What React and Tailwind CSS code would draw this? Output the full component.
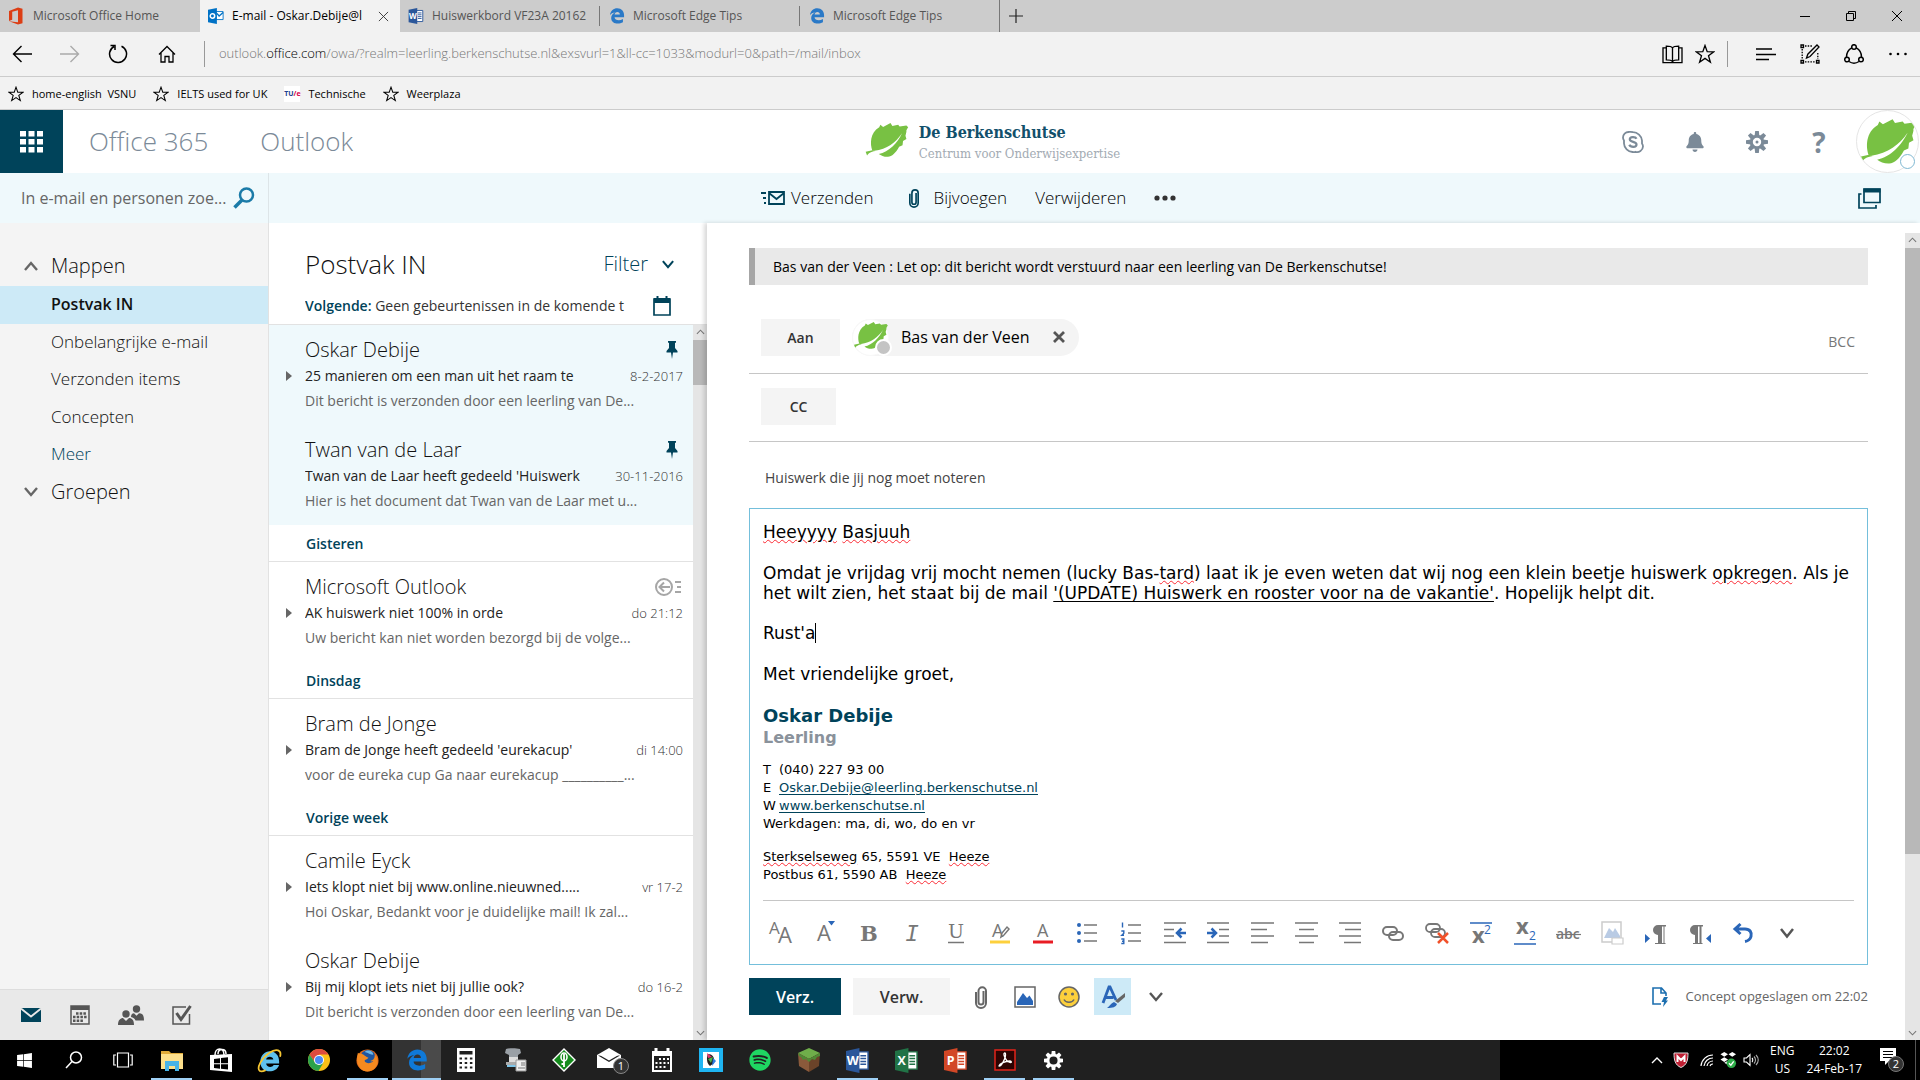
import {
  FaSpotify,
  FaWindows,
  FaBell,
} from "react-icons/fa";


// ---------- shared drawings ----------

function Leaf({ className }) {
  return (
    <svg viewBox="0 0 44 35" className={className} fill="#78c143">
      <path d="M7 28.500C4.300 22 4.500 10 14 4.500L15.200 1.800 18 4 25.600 0l1.900 3 6-1.200L35 3.600l7-1.100 1.800 2C43 6 41.500 7.500 42 9l-1 4 1 3.500-3.500 2L38 23l-3.500 1.500C31 31 27 34.500 23 34.800 19 35 16 33.500 13.500 31.800 24 30 33 20 37.500 10.500 31 20 22 27 9 28.600Z" />
      <path d="M0 29.500 7 28l3 .8C5 29.800 3 31 1.500 33.500Z" />
    </svg>
  );
}

function OfficeFile({ letter, color, className }) {
  return (
    <svg viewBox="0 0 24 26" className={className}>
      <path d="M12 4h11v18H12z" fill="#fff" stroke={color} strokeWidth="1.500" />
      <path d="M15 8h6M15 11h6M15 14h6M15 17h6" stroke={color} strokeWidth="1.500" />
      <path d="M0 3 14 0v26L0 23z" fill={color} />
      <text x="7" y="18" textAnchor="middle" fontSize="13" fontWeight="700" fontFamily="Open Sans, sans-serif" fill="#fff">
        {letter}
      </text>
    </svg>
  );
}

function EdgeLogo({ className, color = "#2a79c7" }) {
  return (
    <svg viewBox="0 0 24 24" className={className}>
      <path
        fill={color}
        d="M1.500 10.700C2.300 4.300 7 .5 12.300 .5 18.800 .5 22.600 5.200 22.600 11v2.700H8.300c.2 4.200 6.700 6.200 12.600 2.700v4.900C14.400 25 3.600 24 3.300 15.300 3.200 11.400 5.300 8.500 8.900 6.900 5.800 7 3.200 8.200 1.500 10.700ZM8.400 9.700h7.900c0-2.300-1.500-3.700-3.800-3.700C10.200 6 8.700 7.400 8.400 9.700Z"
      />
    </svg>
  );
}

function Star({ className }) {
  return (
    <svg viewBox="0 0 20 20" className={className} fill="none" stroke="currentColor" strokeWidth="1.300">
      <path d="m10 1.500 2.200 6.200 6.600.1-5.300 4 1.900 6.400-5.400-3.800-5.400 3.800 1.900-6.400-5.300-4 6.600-.1z" />
    </svg>
  );
}

function Chevron({ up, className }) {
  return (
    <svg viewBox="0 0 14 10" className={className} fill="none" stroke="currentColor" strokeWidth="2.400">
      {up ? <path d="M1 9 7 2l6 7" /> : <path d="m1 1 6 7 6-7" />}
    </svg>
  );
}

function Clip({ className }) {
  return (
    <svg viewBox="0 0 12 24" className={className} fill="none" stroke="currentColor" strokeWidth="2">
      <path d="M8.500 6v11a2.500 2.500 0 0 1-5 0V6a3.700 3.700 0 0 1 7.500 0v12a5 5 0 0 1-10 0V7" />
    </svg>
  );
}

function ThinArrow({ up }) {
  return (
    <svg viewBox="0 0 10 6" className="w-[9px] h-[6px]" fill="none" stroke="#777" strokeWidth="1.200">
      {up ? <path d="m1 5 4-4 4 4" /> : <path d="m1 1 4 4 4-4" />}
    </svg>
  );
}

function Gear({ className }) {
  const teeth = [0, 45, 90, 135, 180, 225, 270, 315];
  return (
    <svg viewBox="0 0 22 22" className={className} fill="currentColor">
      {teeth.map((a) => (
        <path key={a} d="M9 0h4l.6 5H8.400z" transform={`rotate(${a} 11 11)`} />
      ))}
      <circle cx="11" cy="11" r="6.200" fill="none" stroke="currentColor" strokeWidth="3" />
    </svg>
  );
}


// ---------- browser ----------

const tips = ["tips-1", "tips-2"];

function TabStrip() {
  return (
    <div className="flex h-8 shrink-0 bg-[#ccc] text-[12px] text-[#555]">
      <button className="flex w-[200px] items-center gap-[9px] pl-2 text-left">
        <svg viewBox="0 0 16 18" className="w-4 h-[18px] shrink-0">
          <path fill="#dc3e15" d="M1 4 10 .5l4.500 1.300v14.400L10 17.500 1 14.300l9 1V3.300L4.200 4.700v8L1 14z" />
        </svg>
        <span className="truncate">Microsoft Office Home</span>
      </button>
      <div className="flex w-[200px] items-center gap-2 bg-[#f2f2f2] pl-2 text-black">
        <svg viewBox="0 0 18 18" className="size-4 shrink-0">
          <path fill="#fff" stroke="#0072c6" d="M9 4h8v9H9z" />
          <path fill="none" stroke="#0072c6" strokeWidth="1.500" d="m10 6 2.500 3L17 5" />
          <path fill="#0072c6" d="m0 2 10-2v18L0 16z" />
          <circle cx="5" cy="9" r="2.500" fill="none" stroke="#fff" strokeWidth="1.700" />
        </svg>
        <span className="w-[138px] overflow-hidden whitespace-nowrap">E-mail - Oskar.Debije@l</span>
        <button aria-label="Tabblad sluiten">
          <svg viewBox="0 0 12 12" className="size-[11px]" stroke="#333" fill="none">
            <path d="m1 1 10 10M11 1 1 11" />
          </svg>
        </button>
      </div>
      <button className="flex w-[199px] items-center gap-2 pl-2 text-left">
        <OfficeFile letter="W" color="#2b579a" className="size-4 shrink-0" />
        <span className="overflow-hidden whitespace-nowrap w-[158px]">Huiswerkbord VF23A 20162</span>
      </button>
      {tips.map((id) => (
        <button key={id} className="flex w-[200px] items-center text-left">
          <span className="h-5 w-px bg-[#777]" />
          <span className="flex items-center gap-2 pl-[9px]">
            <EdgeLogo className="size-4 shrink-0" />
            Microsoft Edge Tips
          </span>
        </button>
      ))}
      <button className="flex items-center border-l border-[#777] pl-[9px]" aria-label="Nieuw tabblad">
        <svg viewBox="0 0 14 14" className="size-[14px]" stroke="#222" strokeWidth="1.200">
          <path d="M7 0v14M0 7h14" />
        </svg>
      </button>
      <div className="ml-auto flex items-center gap-9 pr-[18px]">
        <button aria-label="Minimaliseren">
          <svg viewBox="0 0 10 10" className="size-[10px]" stroke="#000"><path d="M0 5.500h10" /></svg>
        </button>
        <button aria-label="Verkleinen">
          <svg viewBox="0 0 10 10" className="size-[10px]" stroke="#000" fill="none">
            <path d="M.5 2.500h7v7h-7zM2.500 2.500v-2h7v7h-2" />
          </svg>
        </button>
        <button aria-label="Sluiten">
          <svg viewBox="0 0 10 10" className="size-[10px]" stroke="#000"><path d="m0 0 10 10M10 0 0 10" /></svg>
        </button>
      </div>
    </div>
  );
}

function AddressBar() {
  return (
    <div className="flex h-[45px] shrink-0 items-center border-b border-[#ccc] bg-[#f2f2f2] text-black">
      <div className="flex w-[204px] items-center gap-7 pl-3">
        <button aria-label="Terug">
          <svg viewBox="0 0 20 18" className="w-5 h-[18px]" fill="none" stroke="#000" strokeWidth="1.400"><path d="M20 9H1.500M9.500 1l-8 8 8 8" /></svg>
        </button>
        <button aria-label="Vooruit">
          <svg viewBox="0 0 20 18" className="w-5 h-[18px]" fill="none" stroke="#aaa" strokeWidth="1.400"><path d="M0 9h18.500M10.500 1l8 8-8 8" /></svg>
        </button>
        <button aria-label="Vernieuwen">
          <svg viewBox="0 0 20 20" className="size-5" fill="none" stroke="#000" strokeWidth="1.500"><path d="M13.500 2.200A8.500 8.500 0 1 1 6 2.500M2.500 1.500h4.500v4.500" /></svg>
        </button>
        <button aria-label="Startpagina" className="pl-0.5">
          <svg viewBox="0 0 18 18" className="size-[18px]" fill="none" stroke="#000" strokeWidth="1.300"><path d="M1 9.500 9 1.500l8 8M3 8v9h4v-5.500h4V17h4V8" /></svg>
        </button>
      </div>
      <span className="h-[26px] w-px bg-[#999]" />
      <div className="flex-1 truncate pl-[14px] text-[13px] font-light text-[#777]">
        outlook.<span className="text-black">office.com</span>/owa/?realm=leerling.berkenschutse.nl&exsvurl=1&ll-cc=1033&modurl=0&path=/mail/inbox
      </div>
      <button aria-label="Leesweergave">
        <svg viewBox="0 0 22 20" className="w-[21px] h-[19px]" fill="none" stroke="#000" strokeWidth="1.400"><path d="M11 3v14.500M11 3c-1-1.500-3-1.800-6.500-1.800v14.500c3.500 0 5.500.3 6.500 1.800 1-1.500 3-1.800 6.500-1.800V1.200C14 1.200 12 1.500 11 3ZM4 3H1v15.500h20V3h-3" /></svg>
      </button>
      <button className="ml-3" aria-label="Favorieten"><Star className="size-[20px]" /></button>
      <span className="mx-3 h-[26px] w-px bg-[#999]" />
      <div className="flex items-center gap-6 pl-4 pr-3">
        <button aria-label="Hub">
          <svg viewBox="0 0 20 14" className="w-5 h-[14px]" stroke="#000" strokeWidth="1.300"><path d="M0 2h16M0 7.500h20M0 12.500h13" /></svg>
        </button>
        <button aria-label="Webnotitie">
          <svg viewBox="0 0 20 20" className="size-5" fill="none" stroke="#000" strokeWidth="1.300">
            <path d="M1 1h2.500v2.500H1zM1 16.500h2.500V19H1zM16.500 16.500H19V19h-2.500z" />
            <path strokeDasharray="1.500 1.200" d="M5 2h7M2.200 5v10M5 17.800h10M17.800 9v6" />
            <path d="m6.500 14 1.300-3.800L17 1l2 2-9 9.500z" />
          </svg>
        </button>
        <button aria-label="Delen">
          <svg viewBox="0 0 20 20" className="size-5" fill="none" stroke="#000" strokeWidth="1.500">
            <circle cx="10" cy="3" r="2.300" /><circle cx="3" cy="15.500" r="2.300" /><circle cx="17" cy="15.500" r="2.300" />
            <path d="M7.700 3.800C4.500 5.500 2.500 9 2.500 13M12.300 3.800c3.200 1.700 5.200 5.200 5.200 9.200M5 17.500c3 2 7 2 10 0" />
          </svg>
        </button>
        <button aria-label="Meer">
          <svg viewBox="0 0 20 4" className="w-5 h-1"><circle cx="2.500" cy="2" r="1.300" /><circle cx="10" cy="2" r="1.300" /><circle cx="17.500" cy="2" r="1.300" /></svg>
        </button>
      </div>
    </div>
  );
}

function FavouritesBar() {
  return (
    <div className="flex h-[33px] shrink-0 items-center gap-[17px] border-b border-[#ccc] bg-[#f2f2f2] pt-0.5 pl-2 text-[11px] text-black">
      <a href="#home" className="flex items-center gap-2"><Star className="size-4 shrink-0" />home-english&nbsp; VSNU</a>
      <a href="#ielts" className="flex items-center gap-2"><Star className="size-4 shrink-0" />IELTS used for UK</a>
      <a href="#tue" className="flex items-center gap-2">
        <span className="flex size-4 items-center justify-center bg-white text-[7px] font-bold text-[#20408f]">TU<span className="text-[#d6004a]">/e</span></span>
        Technische
      </a>
      <a href="#weer" className="flex items-center gap-2"><Star className="size-4 shrink-0" />Weerplaza</a>
    </div>
  );
}


// ---------- Office header ----------

function SuiteHeader() {
  return (
    <header className="flex h-[63px] shrink-0 items-center bg-white">
      <button className="flex h-full w-[63px] items-center justify-center bg-[#00435a]" aria-label="Apps">
        <svg viewBox="0 0 23 22" className="w-[23px] h-[22px]" fill="#fff">
          <path d="M0 0h6v5.500H0zM8.500 0h6v5.500h-6zM17 0h6v5.500h-6zM0 8h6v5.500H0zM8.500 8h6v5.500h-6zM17 8h6v5.500h-6zM0 16h6v5.500H0zM8.500 16h6v5.500h-6zM17 16h6v5.500h-6z" />
        </svg>
      </button>
      <div className="flex flex-1 gap-[52px] pl-[26px] text-[26px] font-light text-[#7b8a98]">
        <span>Office 365</span>
        <span>Outlook</span>
      </div>
      <div className="flex items-center gap-[10px]">
        <Leaf className="mb-1 h-[34px] w-[44px]" />
        <div className="pt-[3px] pr-6 font-['DejaVu_Serif_Condensed','DejaVu_Serif',serif] leading-[21px]">
          <div className="text-[16px] font-bold text-[#12506b]">De Berkenschutse</div>
          <div className="text-[13px] text-[#a3abb3]">Centrum voor Onderwijsexpertise</div>
        </div>
      </div>
      <div className="flex flex-1 items-center justify-end text-[#7b8a98]">
        <button className="flex w-[62px] justify-center" aria-label="Skype">
          <svg viewBox="0 0 22 22" className="size-[22px]" fill="none" stroke="currentColor" strokeWidth="1.800">
            <path d="M6.500 1C3.500 1 1 3.500 1 6.500c0 1.200.4 2.200 1 3v3c.2 4.500 4 8.300 8.500 8.500 1 .2 2 .1 3-.2 3.500 1 7.300-1.500 7.500-5.300 0-1.200-.4-2.200-1-3v-3C19.500 5 15.500 1.200 11 1.200 9.500.8 8 1 6.500 1Z" />
            <path strokeWidth="2.200" d="M14.500 7.800C13.500 5.500 7.800 5.400 7.800 8.300c0 3.200 6.700 2 6.700 5.200 0 3.200-6 3-7.200.3" />
          </svg>
        </button>
        <button className="flex w-[62px] justify-center" aria-label="Meldingen"><FaBell className="size-5" /></button>
        <button className="flex w-[62px] justify-center" aria-label="Instellingen">
          <svg viewBox="0 0 22 22" className="size-[22px]" fill="currentColor">
            {[0, 45, 90, 135, 180, 225, 270, 315].map((a) => (
              <path key={a} d="M9.200 0h3.600l.6 5H8.600z" transform={`rotate(${a} 11 11)`} />
            ))}
            <circle cx="11" cy="11" r="5.700" fill="none" stroke="currentColor" strokeWidth="3" />
            <circle cx="11" cy="11" r="1.500" />
          </svg>
        </button>
        <button className="w-[62px] text-[28px] leading-8 font-bold" aria-label="Help">?</button>
        <button className="relative ml-[6px] mr-px size-[63px]" aria-label="Account">
          <span className="flex size-full items-center justify-center overflow-hidden rounded-full border border-[#e5e5e5]">
            <Leaf className="h-[45px] w-[56px]" />
          </span>
          <span className="absolute right-1 bottom-1 size-[15px] rounded-full border border-[#7fb8d2] bg-white" />
        </button>
      </div>
    </header>
  );
}

function CommandBar() {
  return (
    <div className="flex h-[50px] shrink-0 items-center bg-[#eff9fc]">
      <div className="flex h-full w-[269px] shrink-0 items-center border-r border-[#dde5e8] pl-[21px]">
        <input
          aria-label="Zoeken"
          placeholder="In e-mail en personen zoe..."
          className="w-[212px] bg-transparent text-[16px] text-[#444] outline-none placeholder:text-[#666]"
        />
        <button aria-label="Zoek">
          <svg viewBox="0 0 22 22" className="size-[22px]" fill="none" stroke="#1b7ba8" strokeWidth="2.500">
            <circle cx="13.500" cy="8" r="6.500" /><path strokeWidth="3.500" d="M9 13 1.500 20.500" />
          </svg>
        </button>
      </div>
      <div className="flex flex-1 items-center pl-[492px] text-[17px] font-light text-black">
        <button className="flex items-center gap-[6px]">
          <svg viewBox="0 0 24 14" className="w-6 h-[14px]" fill="none" stroke="#00435a" strokeWidth="1.800">
            <path d="M8 1h15v12H8zM8 2l7.500 6L23 2M0 2h5M2 7h3M3 12h2" />
          </svg>
          Verzenden
        </button>
        <button className="ml-9 flex items-center gap-[14px]">
          <Clip className="h-5 w-[10px] text-[#00435a]" />
          Bijvoegen
        </button>
        <button className="ml-7">Verwijderen</button>
        <button className="ml-7" aria-label="Meer opdrachten">
          <svg viewBox="0 0 22 6" className="w-[22px] h-[6px]" fill="#333"><circle cx="3" cy="3" r="2.600" /><circle cx="11" cy="3" r="2.600" /><circle cx="19" cy="3" r="2.600" /></svg>
        </button>
      </div>
      <button className="mr-[39px]" aria-label="Openen in nieuw venster">
        <svg viewBox="0 0 23 21" className="w-[23px] h-[21px]" fill="none" stroke="#00435a" strokeWidth="1.700">
          <path d="M6 1h16v13.500H6zM3.500 6H1v14h17v-3" /><path strokeWidth="4" d="M5.500 2.500h17" />
        </svg>
      </button>
    </div>
  );
}


// ---------- folders ----------

const folders = ["Postvak IN", "Onbelangrijke e-mail", "Verzonden items", "Concepten", "Meer"];

function Sidebar() {
  return (
    <nav className="flex w-[269px] shrink-0 flex-col border-r border-[#e2e2e2] bg-[#f4f4f4] text-[#111]">
      <button className="mt-[23px] flex h-10 items-center gap-[13px] pl-6 text-[20px] font-light">
        <Chevron up className="h-[10px] w-[14px] text-[#666]" />
        Mappen
      </button>
      <ul className="grid h-[188px] grid-rows-5 text-[17px] font-light">
        {folders.map((name) => (
          <li key={name}>
            <button
              className={
                "flex h-full w-full items-center pb-0.5 pl-[51px] " +
                (name === "Postvak IN" ? "bg-[#cdeaf7] text-[16px] font-semibold" : name === "Meer" ? "text-[#00435a]" : "")
              }
            >
              {name}
            </button>
          </li>
        ))}
      </ul>
      <button className="flex h-[37px] items-center gap-[13px] pb-0.5 pl-6 text-[20px] font-light">
        <Chevron className="h-[10px] w-[14px] text-[#666]" />
        Groepen
      </button>
      <div className="mt-auto flex h-[51px] items-center gap-7 border-t border-[#ddd] bg-[#e9e9e9] pl-5 text-[#555]">
        <button aria-label="E-mail" className="px-px">
          <svg viewBox="0 0 20 14" className="w-5 h-[14px]"><path fill="#00435a" d="M0 0h20v14H0z" /><path fill="none" stroke="#e9e9e9" strokeWidth="1.800" d="m0 .5 10 8 10-8" /></svg>
        </button>
        <button aria-label="Agenda">
          <svg viewBox="0 0 20 20" className="size-5" fill="none" stroke="currentColor"><path strokeWidth="1.500" d="M1 1h18v18H1z" /><path strokeWidth="4" d="M1 3h18" /><path strokeWidth="2.500" strokeDasharray="2.500 1.200" d="M6 8.500h11M3 12h14M3 15.800h11" /></svg>
        </button>
        <button aria-label="Personen">
          <svg viewBox="0 0 26 20" className="w-[26px] h-5" fill="currentColor">
            <circle cx="8" cy="9" r="3.700" /><path d="M0 20c0-5 2.500-7 5-7l3 3 3-3c3 0 5 2 5 7z" />
            <circle cx="18.500" cy="4" r="3.700" /><path d="M13 12c0-2.500 1-3.800 3-3.800l2.500 2.500L21 8.200c3.500 0 5 2 5 7.300h-8.500C17 13.500 15 12.500 13 12z" />
          </svg>
        </button>
        <button aria-label="Taken">
          <svg viewBox="0 0 20 20" className="size-5" fill="none" stroke="currentColor"><path strokeWidth="1.500" d="M17.500 9v10H1V2h13" /><path strokeWidth="3" d="m4.500 8 4.500 6.500L18.500 1" /></svg>
        </button>
      </div>
    </nav>
  );
}


// ---------- message list ----------

const messages = [
  { from: "Oskar Debije", subject: "25 manieren om een man uit het raam te", date: "8-2-2017", preview: "Dit bericht is verzonden door een leerling van De...", pinned: true, thread: true },
  { from: "Twan van de Laar", subject: "Twan van de Laar heeft gedeeld 'Huiswerk", date: "30-11-2016", preview: "Hier is het document dat Twan van de Laar met u...", pinned: true },
  { group: "Gisteren" },
  { from: "Microsoft Outlook", subject: "AK huiswerk niet 100% in orde", date: "do 21:12", preview: "Uw bericht kan niet worden bezorgd bij de volge...", bounced: true, thread: true },
  { group: "Dinsdag" },
  { from: "Bram de Jonge", subject: "Bram de Jonge heeft gedeeld 'eurekacup'", date: "di 14:00", preview: "voor de eureka cup Ga naar eurekacup __________...", thread: true },
  { group: "Vorige week" },
  { from: "Camile Eyck", subject: "Iets klopt niet bij www.online.nieuwned.....", date: "vr 17-2", preview: "Hoi Oskar, Bedankt voor je duidelijke mail! Ik zal...", thread: true },
  { from: "Oskar Debije", subject: "Bij mij klopt iets niet bij jullie ook?", date: "do 16-2", preview: "Dit bericht is verzonden door een leerling van De...", thread: true },
];

function MessageRow({ m }) {
  return (
    <button className={"flex h-[100px] w-full flex-col pt-3 pr-[10px] text-left " + (m.pinned ? "bg-[#eff9fc]" : "")}>
      <span className="flex w-full items-center pl-9 text-[20px] leading-[26px] font-light text-[#111]">
        <span className="flex-1">{m.from}</span>
        {m.pinned && (
          <svg viewBox="0 0 12 18" className="mr-[5px] h-[18px] w-3" fill="#00435a"><path d="M2 0h8v1.500L9 2v5l2.500 3v1.500H7L6 18 5 11.500H.5V10L3 7V2L2 1.500z" /></svg>
        )}
        {m.bounced && (
          <svg viewBox="0 0 28 18" className="h-[18px] w-7" fill="none" stroke="#a6a6a6" strokeWidth="2">
            <circle cx="9" cy="9" r="8" /><path d="M15 9H5M9 4.500 4.500 9 9 13.500M20 4h6M22 9h4M20 14h6" />
          </svg>
        )}
      </span>
      <span className="flex w-full items-center text-[14px] leading-[26px] text-[#222]">
        <span className="w-9 shrink-0 pl-[17px]">
          {m.thread && <svg viewBox="0 0 6 10" className="h-[10px] w-[6px]" fill="#666"><path d="m0 0 6 5-6 5z" /></svg>}
        </span>
        <span className="w-[276px] overflow-hidden whitespace-nowrap">{m.subject}</span>
        <span className="ml-auto text-[13px] font-light text-[#333]">{m.date}</span>
      </span>
      <span className="pl-9 text-[14px] leading-[24px] text-[#666]">{m.preview}</span>
    </button>
  );
}

function MessageList() {
  return (
    <section className="flex w-[438px] shrink-0 flex-col bg-white">
      <div className="flex h-[102px] shrink-0 flex-col border-b border-[#e2e2e2] pl-9">
        <div className="mt-[22px] flex h-[38px] items-center">
          <h1 className="flex-1 text-[26px] font-light text-[#111]">Postvak IN</h1>
          <button className="mr-[33px] flex items-center gap-[14px] text-[20px] font-light text-[#00435a]">
            Filter
            <Chevron className="h-[9px] w-3" />
          </button>
        </div>
        <div className="mt-3 flex items-center text-[14px] text-[#333]">
          <span className="w-[330px] overflow-hidden whitespace-nowrap">
            <b className="font-semibold text-[#00435a]">Volgende:</b> Geen gebeurtenissen in de komende t
          </span>
          <button className="ml-[18px]" aria-label="Agenda openen">
            <svg viewBox="0 0 18 20" className="w-[18px] h-5" fill="none" stroke="#00435a"><path strokeWidth="1.700" d="M1 3h16v16H1z" /><path strokeWidth="5" d="M1 4.500h16" /><path strokeWidth="2" d="M4.500 0v4M13.500 0v4" /></svg>
          </button>
        </div>
      </div>
      <div className="flex min-h-0 flex-1">
        <div className="min-w-0 flex-1 overflow-hidden">
          {messages.map((m, i) =>
            m.group ? (
              <h2 key={i} className="flex h-[37px] items-center border-b border-[#e2e2e2] pl-[37px] text-[14px] font-semibold text-[#00435a]">
                {m.group}
              </h2>
            ) : (
              <MessageRow key={i} m={m} />
            )
          )}
        </div>
        <div className="flex w-[14px] flex-col items-center bg-[#e5e5e5] py-1">
          <ThinArrow up />
          <div className="mt-[5px] h-[45px] w-full bg-[#b8b8b8]" />
          <div className="mt-auto flex"><ThinArrow /></div>
        </div>
      </div>
    </section>
  );
}


// ---------- compose ----------

const wavy = "underline decoration-wavy decoration-1 decoration-red-500 underline-offset-1";
const g = "#777";
const b = "#2a66b8";

const formatTools = [
  ["Lettertype", <><text x="0" y="14" fontSize="17" fill={g}>A</text><text x="9" y="23" fontSize="22" fill={g}>A</text></>],
  ["Tekengrootte", <><text x="4" y="21" fontSize="22" fill={g}>A</text><path fill={b} d="M15 1h7l-3.500 4.500z" /></>],
  ["Vet", <text x="4" y="21" fontSize="21" fontWeight="700" fontFamily="DejaVu Serif" fill={g}>B</text>],
  ["Cursief", <text x="5" y="21" fontSize="23" fontStyle="italic" fontFamily="Liberation Mono" fill={g}>I</text>],
  ["Onderstrepen", <><text x="4" y="18" fontSize="19" fontFamily="DejaVu Serif" fill={g}>U</text><path stroke={g} strokeWidth="1.500" d="M4 22.500h16" /></>],
  ["Markeren", <><text x="4" y="17" fontSize="18" fill={g}>A</text><path fill="#fff" stroke={g} strokeWidth="1.500" d="m13 17 1-4 5-6 2 2-5 6z" /><path stroke="#fdd03c" strokeWidth="3" d="M2 22h20" /></>],
  ["Tekstkleur", <><text x="6" y="17" fontSize="18" fill={g}>A</text><path stroke="#e81c24" strokeWidth="3" d="M2 22h20" /></>],
  ["Opsomming", <><path stroke={g} strokeWidth="1.500" d="M9 5h13M9 13h13M9 21h13" /><g fill={b}><circle cx="4" cy="5" r="2" /><circle cx="4" cy="13" r="2" /><circle cx="4" cy="21" r="2" /></g></>],
  ["Nummering", <><path stroke={g} strokeWidth="1.500" d="M9 5h13M9 13h13M9 21h13" /><g stroke={b} strokeWidth="1.400" fill="none"><path d="M3.500 2.500v5M2.300 11h2.500v2.200l-2 2H5M2.300 19h2.500v4.500H2.300M3 21.200h2" /></g></>],
  ["Inspringing verkleinen", <><path stroke={g} strokeWidth="1.500" d="M1 3h22M1 9.500h10M1 16h10M1 22.500h22" /><path stroke={b} strokeWidth="2.500" fill="none" d="M23 13h-9M18.500 8.500 14 13l4.500 4.500" /></>],
  ["Inspringing vergroten", <><path stroke={g} strokeWidth="1.500" d="M1 3h22M13 9.500h10M13 16h10M1 22.500h22" /><path stroke={b} strokeWidth="2.500" fill="none" d="M1 13h9M5.500 8.500 10 13l-4.500 4.500" /></>],
  ["Links uitlijnen", <path stroke={g} strokeWidth="1.500" d="M1 3h23M1 9.500h16M1 16h23M1 22.500h17" />],
  ["Centreren", <path stroke={g} strokeWidth="1.500" d="M1 3h23M5 9.500h15M1 16h23M5 22.500h15" />],
  ["Rechts uitlijnen", <path stroke={g} strokeWidth="1.500" d="M1 3h22M7 9.500h16M1 16h22M6 22.500h17" />],
  ["Hyperlink", <g fill="none" stroke={g} strokeWidth="2"><rect x="2" y="7" width="14" height="8" rx="4" /><rect x="8" y="12" width="14" height="8" rx="4" /></g>],
  ["Hyperlink verwijderen", <><g fill="none" stroke={g} strokeWidth="1.800"><rect x="1" y="4" width="14" height="8" rx="4" /><rect x="6" y="9" width="14" height="8" rx="4" /></g><path stroke="#f1512a" strokeWidth="2.500" d="m13 13 10 10M23 13 13 23" /></>],
  ["Superscript", <><text x="3" y="23" fontSize="22" fontWeight="700" fill={g}>x</text><text x="15" y="14" fontSize="12" fill={b}>2</text><path stroke={b} strokeWidth="1.500" d="M1 3h22" /></>],
  ["Subscript", <><text x="3" y="14" fontSize="22" fontWeight="700" fill={g}>x</text><text x="16" y="20" fontSize="12" fill={b}>2</text><path stroke={b} strokeWidth="1.500" d="M1 24h22" /></>],
  ["Doorhalen", <><text x="0" y="19" fontSize="14" fontWeight="600" fill={g}>abc</text><path stroke={g} strokeWidth="1.200" d="M0 14.500h25" /></>],
  ["Afbeelding", <><path fill="#fff" stroke="#ccc" strokeWidth="1.500" d="M2 2h19v20H2z" /><path fill="#b9cbe4" d="M4 18l5-10 4 4 2-4 5 8v2z" /><path fill="#fff" stroke="#ccc" strokeWidth="1.200" d="M12 18h11v6H12z" /></>],
  ["Links naar rechts", <><path fill={b} d="m1 14 5 4.500-5 4.500z" /><path fill={g} d="M22 5H14a5 5 0 0 0 0 10v8h-3v1h8v-1h-1V6.500h1.500V23h-1v1h3v-1h-1V6.500H22Z" /></>],
  ["Rechts naar links", <><path fill={b} d="m23 14-5 4.500 5 4.500z" /><path fill={g} d="M15 5H7a5 5 0 0 0 0 10v8H5v1h6v-1h-1V6.500h1.500V23h-1v1h4v-1h-1V6.500H15Z" /></>],
  ["Ongedaan maken", <path fill="none" stroke={b} strokeWidth="3" d="M9.500 4 4 9l5.500 5M4.500 9H14c5 0 7 3.500 6 7.500-.8 3-3 4.500-6 5" />],
  ["Meer opmaak", <path fill="none" stroke="#555" strokeWidth="2.500" d="m6 9 6 7.500L18 9" />],
];

function Editor() {
  return (
    <div className="mt-[10px] border border-[#74bfdb]">
      <div
        role="textbox"
        aria-label="Bericht"
        className="pt-[13px] pl-[13px] pr-[23px] font-['DejaVu_Sans',Verdana,sans-serif] text-[17px] leading-[20px] text-black"
      >
        <p><span className={wavy}>Heeyyyy</span> <span className={wavy}>Basjuuh</span></p>
        <p className="mt-[21px]">
          <span className="block whitespace-nowrap [text-align-last:justify]">
            Omdat je vrijdag vrij mocht nemen (lucky Bas-<span className={wavy}>tard</span>) laat ik je even weten dat wij nog een klein beetje huiswerk <span className={wavy}>opkregen</span>. Als je
          </span>
          het wilt zien, het staat bij de mail <u className="underline-offset-2">'(UPDATE) Huiswerk en rooster voor na de vakantie'</u>. Hopelijk helpt dit.
        </p>
        <p className="mt-5 flex">Rust'a<span className="h-5 w-px bg-black" /></p>
        <p className="mt-[21px]">Met vriendelijke groet,</p>
        <p className="mt-[21px] text-[18px] leading-[22px] font-bold text-[#00435a]">Oskar Debije</p>
        <p className="text-[16px] leading-[22px] font-bold text-[#8a929b]">Leerling</p>
        <div className="mt-3 grid grid-cols-[16px_auto] text-[13px] leading-[18px]">
          <span>T</span><span>(040) 227 93 00</span>
          <span>E</span><a href="mailto:Oskar.Debije@leerling.berkenschutse.nl" className="text-[#00435a] underline underline-offset-2">Oskar.Debije@leerling.berkenschutse.nl</a>
          <span>W</span><a href="#site" className="text-[#00435a] underline underline-offset-2">www.berkenschutse.nl</a>
        </div>
        <p className="text-[13px] leading-[18px]">Werkdagen: ma, di, wo, do en vr</p>
        <p className="mt-[15px] text-[13px] leading-[18px]"><span className={wavy}>Sterkselseweg</span> 65, 5591 VE &nbsp;<span className={wavy}>Heeze</span></p>
        <p className="text-[13px] leading-[18px]">Postbus 61, 5590 AB &nbsp;<span className={wavy}>Heeze</span></p>
      </div>
      <div className="mx-[13px] mt-4 border-t border-[#c6c6c6]" />
      <div className="ml-[9px] grid h-[63px] w-[1050px] grid-cols-[repeat(24,minmax(0,1fr))] items-center">
        {formatTools.map(([label, art]) => (
          <button key={label} aria-label={label} className="flex justify-center">
            <svg viewBox="0 0 24 26" className="h-[26px] w-6 overflow-visible font-['Open_Sans',sans-serif]">{art}</svg>
          </button>
        ))}
      </div>
    </div>
  );
}

function Compose() {
  return (
    <main className="flex min-w-0 flex-1 bg-white shadow-[-3px_0_4px_rgba(0,0,0,0.15)]">
      <div className="min-w-0 flex-1 pt-[25px] pr-[37px] pl-[42px]">
        <div className="flex h-[37px] items-center border-l-[6px] border-[#a6a6a6] bg-[#e9e9e9] pl-[18px] text-[14px] text-black">
          Bas van der Veen : Let op: dit bericht wordt verstuurd naar een leerling van De Berkenschutse!
        </div>
        <div className="flex h-[89px] items-center border-b border-[#c6c6c6] pt-4 pl-3">
          <button className="h-[37px] w-[79px] bg-[#f4f4f4] text-[14px] font-semibold text-[#333]">Aan</button>
          <div className="ml-3 flex h-[37px] items-center rounded-full bg-[#f4f4f4] pr-[14px] text-[16px] text-black">
            <span className="relative flex size-[37px] items-center justify-center rounded-full border border-[#f8f8f8] bg-white">
              <Leaf className="mb-1 h-[27px] w-[34px]" />
              <span className="absolute -right-1 -bottom-px size-[17px] rounded-full border-2 border-white bg-[#c4c4c4]" />
            </span>
            <span className="ml-3">Bas van der Veen</span>
            <button className="ml-[23px]" aria-label="Verwijder ontvanger">
              <svg viewBox="0 0 12 12" className="size-3" stroke="#555" strokeWidth="2.800"><path d="m1 1 10 10M11 1 1 11" /></svg>
            </button>
          </div>
          <button className="ml-auto mr-[13px] pt-2 text-[14px] text-[#777]">BCC</button>
        </div>
        <div className="flex h-[68px] items-center border-b border-[#c6c6c6] pb-0.5 pl-3">
          <button className="h-[37px] w-[75px] bg-[#f4f4f4] text-[14px] font-semibold text-[#333]">CC</button>
        </div>
        <input
          aria-label="Onderwerp"
          defaultValue="Huiswerk die jij nog moet noteren"
          className="mt-4 h-10 w-full pb-0.5 pl-4 text-[14px] text-[#444] outline-none"
        />
        <Editor />
        <div className="mt-[13px] flex items-center">
          <button className="h-[37px] w-[92px] bg-[#00435a] text-[16px] font-semibold text-white">Verz.</button>
          <button className="ml-3 h-[37px] w-[97px] bg-[#f4f4f4] text-[16px] font-semibold text-[#333]">Verw.</button>
          <button className="ml-[25px] text-[#666]" aria-label="Bijlage"><Clip className="h-6 w-3" /></button>
          <button className="ml-[27px]" aria-label="Afbeelding invoegen">
            <svg viewBox="0 0 22 22" className="size-[22px]"><path fill="#fff" stroke="#666" strokeWidth="1.500" d="M1 1h20v20H1z" /><path fill="#2a66b8" d="M3 19v-3L9 7l4 5 2.500-2.500L19 15v4z" /></svg>
          </button>
          <button className="ml-[22px]" aria-label="Emoji">
            <svg viewBox="0 0 22 22" className="size-[22px]" stroke="#666" strokeWidth="1.500"><circle cx="11" cy="11" r="10" fill="#fdd03c" /><path fill="none" d="M6 13.500c1.500 3.500 8.500 3.500 10 0" /><circle cx="7.500" cy="8" r=".8" /><circle cx="14.500" cy="8" r=".8" /></svg>
          </button>
          <button className="ml-[14px] flex size-[37px] items-center justify-center bg-[#cdeaf7]" aria-label="Opmaak">
            <svg viewBox="0 0 24 24" className="size-6">
              <path fill="none" stroke="#2a66b8" strokeWidth="2.800" d="m2 18 6-16h1l6 13M4.500 12.500h8" />
              <path fill="#666" d="M24 8v4l-7 6-3-2z" /><path fill="#2a66b8" d="M6 23c2-1 4-5 7-6l3 2c-1 3-4 4-10 4z" />
            </svg>
          </button>
          <button className="ml-[18px] text-[#555]" aria-label="Meer opties"><Chevron className="h-[10px] w-[14px]" /></button>
          <span className="ml-auto flex items-center gap-[18px] text-[13px] text-[#666]">
            <svg viewBox="0 0 16 20" className="w-4 h-5" fill="none" stroke="#1c6fb0" strokeWidth="1.600"><path d="M14 9V6L9.500 1H1v16h8M9 1v5h5" /><path fill="#1c6fb0" stroke="none" d="M12 10h4l-2 3.500h2L11 20l1-5H9.500z" /></svg>
            Concept opgeslagen om 22:02
          </span>
        </div>
      </div>
      <div className="mt-[10px] flex w-[15px] flex-col items-center bg-[#e5e5e5] py-1">
        <ThinArrow up />
        <div className="mt-[5px] h-[606px] w-full bg-[#b8b8b8]" />
        <div className="mt-auto flex"><ThinArrow /></div>
      </div>
    </main>
  );
}


// ---------- taskbar ----------

function Calc() {
  return <svg viewBox="0 0 18 24" className="h-6 w-[18px]"><path fill="#fff" d="M0 0h18v24H0z" /><path fill="#202020" d="M2.500 3h13v3.500h-13z" /><path stroke="#202020" strokeWidth="2" strokeDasharray="2.500 2.700" d="M2.500 10.500h13M2.500 15h13M2.500 19.500h13" /></svg>;
}

const apps = [
  { name: "Start", art: <FaWindows className="size-[17px] text-white" /> },
  { name: "Zoeken", art: <svg viewBox="0 0 18 18" className="size-[18px]" fill="none" stroke="#fff" strokeWidth="1.500"><circle cx="11" cy="6.500" r="5.500" /><path d="m7 10.500-6 6.500" /></svg> },
  { name: "Taakweergave", art: <svg viewBox="0 0 20 16" className="h-4 w-5" fill="none" stroke="#fff" strokeWidth="1.200"><path d="M4.500 1h11v14h-11zM3 3H.8v10H3M17 3h2.200v10H17" /></svg> },
  { name: "Verkenner", open: true, art: <svg viewBox="0 0 24 22" className="h-[22px] w-6"><path fill="#e0ab3a" d="M1 2h8l2 2h12v6H1z" /><path fill="#fde08c" d="M1 5h22v15H1z" /><path fill="#48b3e6" d="M5 12h14v10h-4v-5H9v5H5z" /></svg> },
  { name: "Store", art: <svg viewBox="0 0 22 24" className="h-6 w-[22px]"><path fill="#fff" d="m0 7 22-1v18L0 22z" /><path fill="none" stroke="#fff" strokeWidth="1.500" d="M5 7c0-8 9-8 9 0M8 6c0-6 8-6 8 0" /><path fill="#000" d="m4 11 6-.8v5H4zM11 10l7-.8v6h-7zM4 16.200h6v4.500L4 20zM11 16.200h7v5.300l-7-.7z" /></svg> },
  { name: "Internet Explorer", art: <svg viewBox="0 0 26 26" className="size-[25px]"><g transform="translate(2 2)"><path fill="#5ec1ee" d="M1.500 12.500C1.500 6 6 1.500 11.500 1.500S21 6 21 12v2H7.500c.3 4 6 5 7.800 1.600H21C18 25 1.500 25 1.500 12.500ZM7.500 10H15c-.4-4-7-4-7.500 0Z" /></g><path fill="none" stroke="#f6c632" strokeWidth="1.800" d="M24 9c2-7-4-9-11-4C5 10-1 21 3 24c2 1 4 0 6-1" /></svg> },
  { name: "Chrome", art: <svg viewBox="0 0 22 22" className="size-[22px]"><circle cx="11" cy="11" r="11" fill="#fbc116" /><path fill="#dd4b3e" d="M1.500 5.500A11 11 0 0 1 20.500 5.500H11L7 13.500z" /><path fill="#2ba24c" d="M1.500 5.500A11 11 0 0 0 10.500 22l5-8.500H7z" /><circle cx="11" cy="11" r="5" fill="#fff" /><circle cx="11" cy="11" r="4" fill="#4a8af4" /></svg> },
  { name: "Firefox", open: true, art: <svg viewBox="0 0 24 24" className="size-[23px]"><circle cx="12" cy="12" r="11.500" fill="#e66b1a" /><circle cx="12.500" cy="9" r="8" fill="#20559f" /><path fill="#6eb7e6" d="M9 3c4-3 9-1 9 3-3 0-5-2-9-3Z" /><path fill="#f58a1f" d="M2 4c1 1.500 4 .5 6 2s2 2 5 3c-1 2-4 1.500-4 3.500 1 3 7 3 9 0-1 0-2 1-3 0 3-1 5-3 4.500-7C25 11 23 21 14 23.300 4 24.500-1 14 2 4Z" /></svg> },
  { name: "Edge", active: true, art: <EdgeLogo className="size-[22px]" color="#0f79d8" /> },
  { name: "Rekenmachine", art: <Calc /> },
  { name: "Scannen", art: <svg viewBox="0 0 24 24" className="size-6"><path fill="#9aa0a6" d="M3 1c4-1 10-1 14 0l1 4-3 2v4H6V7L2 5z" /><path fill="#ddd" d="M6 9h9v5H6z" /><path fill="#7ec6ea" d="M4 17h10v2H4z" /><path fill="#aaa" d="M3 14h11v3H3z" /><path fill="#eee" stroke="#999" d="M13 12h10v11H13z" /><path stroke="#777" d="M18 15h4M18 17h4M15 20h7" /></svg> },
  { name: "Sims", art: <svg viewBox="0 0 24 24" className="size-6"><path fill="#158b1c" stroke="#fff" strokeWidth="1.400" d="m12 1 11 11-11 11L1 12z" /><ellipse cx="12" cy="9" rx="3" ry="4" fill="none" stroke="#fff" strokeWidth="1.600" /><path stroke="#fff" strokeWidth="1.800" d="M12 6v13M9.500 16H12" /></svg> },
  { name: "Mail", art: <svg viewBox="0 0 32 28" className="h-7 w-8"><path fill="#fff" d="M0 9 12 2l12 7v13H0z" /><path fill="#202020" d="M1 9.500h22L12 16z" /><path fill="#fff" d="M2.500 9h19L12 14.500z" /><circle cx="24" cy="20" r="7.500" fill="#333" stroke="#888" /><text x="24" y="24" fontSize="11" textAnchor="middle" fill="#fff">1</text></svg> },
  { name: "Agenda", art: <svg viewBox="0 0 20 24" className="h-6 w-5"><path fill="#fff" d="M0 3h20v21H0z" /><path stroke="#fff" strokeWidth="3" d="M4 0v4M16 0v4" /><path fill="#202020" d="M2 8h16v14H2z" /><path stroke="#fff" strokeWidth="2" strokeDasharray="2 2" d="M7 11h10M3.500 15H17M3.500 19H14" /></svg> },
  { name: "Foto's", art: <svg viewBox="0 0 24 24" className="size-6"><path fill="#1fb5f2" d="M0 0h24v24H0z" /><path fill="#fff" d="M4 4h16v16H4z" /><path fill="#222" d="M9 6c4 0 7 3 6 9l-4 3c-3-2-4-8-2-12Z" /><path fill="#e8336d" d="m8 5 5 4-4 1z" /><path fill="#4eb648" d="m9 11 5-2-2 6z" /><path fill="#2d7be0" d="m14 10 3 3-4 5z" /></svg> },
  { name: "Spotify", art: <FaSpotify className="size-[22px] text-[#1fd662]" /> },
  { name: "Minecraft", art: <svg viewBox="0 0 24 24" className="size-6"><path fill="#6fae4a" d="m12 0 11 5-11 6L1 5z" /><path fill="#8a5a3b" d="m1 5 11 6v13L2 18z" /><path fill="#6b4329" d="m23 5-11 6v13l10-6z" /><path fill="#4f8a35" d="m1 5 11 6 11-6v3l-3 1-2 3-3-1-3 3-3-3-3 1-2-3-2-1z" /></svg> },
  { name: "Word", open: true, art: <OfficeFile letter="W" color="#2b579a" className="h-[25px] w-[23px]" /> },
  { name: "Excel", art: <OfficeFile letter="X" color="#217346" className="h-[25px] w-[23px]" /> },
  { name: "PowerPoint", art: <OfficeFile letter="P" color="#d24726" className="h-[25px] w-[23px]" /> },
  { name: "Acrobat", open: true, art: <svg viewBox="0 0 22 22" className="size-[22px]"><path fill="#2b0403" stroke="#e2231a" strokeWidth="1.500" d="M1 1h20v20H1z" /><path fill="none" stroke="#fff" strokeWidth="1.300" d="M5 17c2 1 7-8 6.500-12-.3-2-2-1-1.500 1 1 4 4 7 6.500 7.500 1.500 0 1-1.500-1-1.500-4 0-10 2.500-10.500 5Z" /></svg> },
  { name: "Instellingen", open: true, art: <Gear className="size-[19px] text-white" /> },
];

function Taskbar() {
  return (
    <footer className="flex h-10 shrink-0 bg-black text-white">
      <div className="flex flex-1">
        {apps.map((app, i) => (
          <button
            key={app.name}
            aria-label={app.name}
            className={
              "relative flex h-full w-[49px] items-center justify-center " +
              (app.active ? "bg-linear-to-r from-[#333] from-60% to-[#4a4a4a] to-60%" : i > 8 ? "bg-[#202020]" : "")
            }
          >
            {app.art}
            {(app.open || app.active) && (
              <span className={"absolute bottom-0 h-[2px] bg-[#9fd0f5] " + (app.active ? "inset-x-0" : "inset-x-1")} />
            )}
          </button>
        ))}
        <div className="flex-1 bg-[#202020]" />
      </div>
      <div className="flex w-[420px] items-center justify-end text-[12px] leading-[18px]">
        <svg viewBox="0 0 12 8" className="mr-[10px] w-3 h-2" fill="none" stroke="#fff" strokeWidth="1.400"><path d="m1 7 5-5 5 5" /></svg>
        <svg viewBox="0 0 16 16" className="mr-[11px] size-4"><path fill="#c01f33" stroke="#ddd" d="M1 1h14c0 7-1 12-7 14.500C2 13 1 8 1 1z" /><path fill="none" stroke="#fff" strokeWidth="2" d="M4.500 10V4.500L8 8l3.500-3.500V10" /></svg>
        <svg viewBox="0 0 14 14" className="mr-[6px] size-[14px]" fill="none" stroke="#fff" strokeWidth="1.200"><path d="M1 13A12 12 0 0 1 13 2M4 13a9 9 0 0 1 9-8M7 13a6 6 0 0 1 6-5M10 13a3 3 0 0 1 3-2" /></svg>
        <svg viewBox="0 0 18 18" className="mr-[6px] size-[17px]"><path fill="#fff" d="m4.500 0 4 2.500-4 2.500-4-2.500zM13 0l4 2.500L13 5 9 2.500zM4.500 5.500l4 2.500-4 2.500-4-2.500zM4.500 11.500 9 9v5z" /><circle cx="12" cy="12" r="5" fill="#2fae4a" /><path fill="none" stroke="#fff" strokeWidth="1.400" d="m9.500 12 2 2 3-4" /></svg>
        <svg viewBox="0 0 17 14" className="mr-[10px] h-[14px] w-[17px]" fill="none" stroke="#fff" strokeWidth="1.100"><path d="M1 5h2.500L7 1.500v11L3.500 9H1zM9 5c1 1 1 3 0 4" /><path stroke="#aaa" d="M11 3.500c2 2 2 5 0 7M13 2c3 3 3 7 0 10" /></svg>
        <div className="mr-3 text-center">ENG<br />US</div>
        <div className="mr-[18px] text-center">22:02<br />24-Feb-17</div>
        <button className="relative mr-[11px] flex" aria-label="Meldingen">
          <svg viewBox="0 0 24 26" className="h-[26px] w-6"><path fill="#fff" d="M0 1h16v13H9l-4 4v-4H0z" /><path stroke="#000" strokeWidth="1.200" d="M3 4.500h10M3 7.500h10M3 10.500h10" /><circle cx="16" cy="17" r="7.500" fill="#333" stroke="#777" /><text x="16" y="21" fontSize="11" textAnchor="middle" fill="#fff">2</text></svg>
        </button>
        <span className="mr-1 h-full w-px bg-[#555]" />
      </div>
    </footer>
  );
}


export default function App() {
  return (
    <div className="flex h-screen flex-col overflow-hidden bg-white font-['Open_Sans','Noto_Sans',sans-serif]">
      <TabStrip />
      <AddressBar />
      <FavouritesBar />
      <SuiteHeader />
      <CommandBar />
      <div className="flex min-h-0 flex-1">
        <Sidebar />
        <MessageList />
        <Compose />
      </div>
      <Taskbar />
    </div>
  );
}
